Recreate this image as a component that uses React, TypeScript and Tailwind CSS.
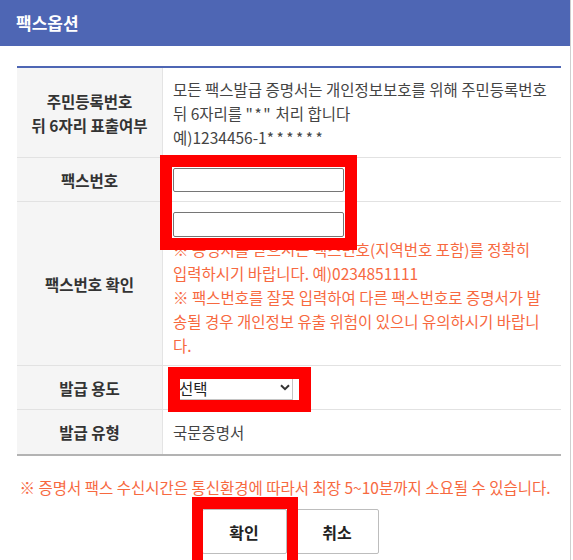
import React from "react";

const font = { fontFamily: '"Noto Sans CJK KR", "Noto Sans", sans-serif' };

function Row({
  label,
  children,
  className = "",
}: {
  label: React.ReactNode;
  children: React.ReactNode;
  className?: string;
}) {
  return (
    <div className={`flex border-b border-[#e2e2e2] ${className}`}>
      <div className="w-[146px] shrink-0 bg-[#f5f5f5] border-r border-[#e4e4e4] flex items-center justify-center text-center font-bold text-[#333] leading-[24px]">
        {label}
      </div>
      <div className="flex-1 pl-[10px] pr-[4px] text-[#444] leading-[24px] whitespace-nowrap">{children}</div>
    </div>
  );
}

export default function App() {
  return (
    <div
      className="relative w-[573px] h-[560px] overflow-hidden bg-white text-[15.5px]"
      style={font}
    >
      <div className="w-[571px] h-full border-r border-[#cfcfcf]">
        <div className="h-[46px] bg-[#4e66b4] flex items-center pl-[16px]">
          <span className="text-white font-bold text-[17px]">팩스옵션</span>
        </div>

        <div className="ml-[17px] w-[544px] mt-[20px] border-t-2 border-[#4e66b4]">
          <Row label={<span>주민등록번호<br />뒤 6자리 표출여부</span>}>
            <div className="pt-[9px] pb-[8px]">
              모든 팩스발급 증명서는 개인정보보호를 위해 주민등록번호
              <br />
              뒤 6자리를 <span className="tracking-[1.5px]">"*"</span> 처리 합니다
              <br />
              예)1234456-1<span className="tracking-[2.5px]">******</span>
            </div>
          </Row>
          <Row label="팩스번호">
            <div className="pt-[10px] pb-[9px]">
              <input
                type="text"
                className="block w-[171px] h-[24px] border border-[#767676] rounded-[2px] bg-white outline-none"
              />
            </div>
          </Row>
          <Row label="팩스번호 확인">
            <div className="pt-[10px] pb-[8px]">
              <input
                type="text"
                className="block w-[171px] h-[25px] border border-[#767676] rounded-[2px] bg-white outline-none"
              />
              <div className="text-[#f7693f]">
                ※ 증명서를 받으시는 팩스번호(지역번호 포함)를 정확히
                <br />
                입력하시기 바랍니다. 예)0234851111
                <br />
                ※ 팩스번호를 잘못 입력하여 다른 팩스번호로 증명서가 발
                <br />
                송될 경우 개인정보 유출 위험이 있으니 유의하시기 바랍니
                <br />
                다.
              </div>
            </div>
          </Row>
          <Row label="발급 용도">
            <div className="pt-[10px] pb-[9px] pl-[6px]">
              <div className="relative w-[114px] h-[24px] border-r border-b border-[#c4c4c4] bg-white">
                <select className="appearance-none w-full h-full bg-transparent outline-none text-[#222] pl-0 leading-[22px]">
                  <option>선택</option>
                </select>
                <svg
                  className="absolute right-[2px] top-[8px] pointer-events-none"
                  width="10"
                  height="7"
                  viewBox="0 0 10 7"
                >
                  <path d="M1 1.2 L5 5.2 L9 1.2" fill="none" stroke="#333" strokeWidth="2" />
                </svg>
              </div>
            </div>
          </Row>
          <Row label="발급 유형" className="border-b-2 border-b-[#b3b3b3]">
            <div className="py-[10px]">국문증명서</div>
          </Row>
        </div>

        <div className="mt-[19px] text-center leading-[24px] text-[#f7693f] whitespace-nowrap">
          ※ 증명서 팩스 수신시간은 통신환경에 따라서 최장 5~10분까지 소요될 수 있습니다.
        </div>

        <div className="mt-[10px] flex justify-center gap-[9px] pl-[10px]">
          <button className="w-[85px] h-[45px] border border-[#bdbdbd] rounded-[2px] bg-white font-bold text-[16px] text-[#222]">
            확인
          </button>
          <button className="w-[83px] h-[45px] border border-[#bdbdbd] rounded-[2px] bg-white font-bold text-[16px] text-[#222]">
            취소
          </button>
        </div>
      </div>

      {/* red annotation frames */}
      <div className="absolute left-[160px] top-[155px] w-[197px] h-[95px] border-[12px] border-[#ff0000] pointer-events-none" />
      <div className="absolute left-[168px] top-[367px] w-[143px] h-[45px] border-[12px] border-[#ff0000] pointer-events-none" />
      <div className="absolute left-[192px] top-[497px] w-[106px] h-[80px] border-[11px] border-t-[12px] border-[#ff0000] pointer-events-none" />
    </div>
  );
}
